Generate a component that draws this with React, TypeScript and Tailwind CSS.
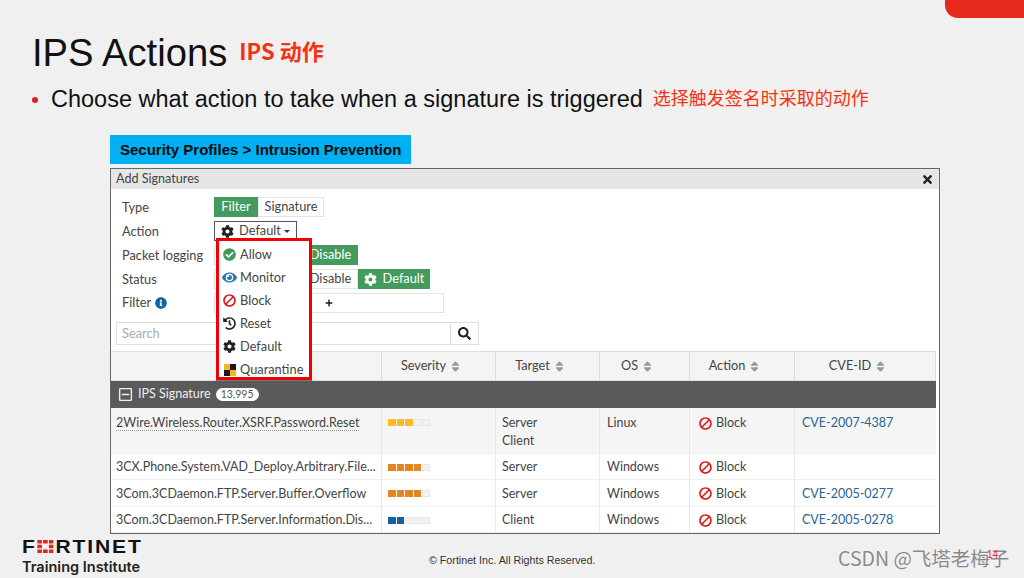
import type { ReactNode } from "react";
import {
  FaBan,
  FaCheckCircle,
  FaCog,
  FaEye,
  FaHistory,
  FaInfoCircle,
  FaPlus,
  FaRegMinusSquare,
  FaSearch,
  FaSort,
  FaTimes,
} from "react-icons/fa";

const CJK = "font-['Noto_Sans_CJK_SC',sans-serif]";
const ARIAL = "font-['Liberation_Sans',sans-serif]";

interface Signature {
  name: string;
  level: number;
  color: string;
  targets: string[];
  os: string;
  cve: string;
  height: string;
  bg: string;
}

const rows: Signature[] = [
  {
    name: "2Wire.Wireless.Router.XSRF.Password.Reset",
    level: 3,
    color: "bg-[#f8bc2a]",
    targets: ["Server", "Client"],
    os: "Linux",
    cve: "CVE-2007-4387",
    height: "h-[46px]",
    bg: "bg-[#f5f5f5]",
  },
  {
    name: "3CX.Phone.System.VAD_Deploy.Arbitrary.File...",
    level: 4,
    color: "bg-[#e58420]",
    targets: ["Server"],
    os: "Windows",
    cve: "",
    height: "h-[26px]",
    bg: "bg-white",
  },
  {
    name: "3Com.3CDaemon.FTP.Server.Buffer.Overflow",
    level: 4,
    color: "bg-[#e58420]",
    targets: ["Server"],
    os: "Windows",
    cve: "CVE-2005-0277",
    height: "h-[27px]",
    bg: "bg-white",
  },
  {
    name: "3Com.3CDaemon.FTP.Server.Information.Dis...",
    level: 2,
    color: "bg-[#14629d]",
    targets: ["Client"],
    os: "Windows",
    cve: "CVE-2005-0278",
    height: "h-[26px]",
    bg: "bg-white",
  },
];

const columns = ["Severity", "Target", "OS", "Action", "CVE-ID"];
const columnGrid = "grid grid-cols-[271px_114px_104px_90px_105px_141px]";

function QuarantineIcon() {
  return (
    <svg width="12" height="12" viewBox="0 0 12 12">
      <rect width="6" height="6" fill="#f5b81c" />
      <rect x="6" width="6" height="6" fill="#1a1a1a" />
      <rect y="6" width="6" height="6" fill="#1a1a1a" />
      <rect x="6" y="6" width="6" height="6" fill="#f5b81c" />
    </svg>
  );
}

function BlockIcon() {
  return <FaBan className="-scale-x-100 text-[13px] text-[#dd1a1a]" />;
}

function FormRow({ label, height, children }: { label: ReactNode; height: string; children: ReactNode }) {
  return (
    <div className={`flex items-center ${height}`}>
      <div className="flex w-[92px] items-center gap-1 text-[#444]">{label}</div>
      {children}
    </div>
  );
}

function MenuItem({ icon, label }: { icon: ReactNode; label: string }) {
  return (
    <div className="flex h-[23px] shrink-0 items-center">
      <div className="flex w-[21px] justify-center">{icon}</div>
      <span className="text-[#444]">{label}</span>
    </div>
  );
}

function ActionMenu() {
  return (
    <div className="absolute top-[17px] left-[2px] z-10 flex h-[142px] w-[96px] flex-col border-[3px] border-[#f00000] bg-white pt-[2px] shadow-[0_1px_0_#777]">
      <MenuItem icon={<FaCheckCircle className="text-[13px] text-[#3f9a57]" />} label="Allow" />
      <MenuItem icon={<FaEye className="text-[15px] text-[#2a77b0]" />} label="Monitor" />
      <MenuItem icon={<BlockIcon />} label="Block" />
      <MenuItem icon={<FaHistory className="text-[13px] text-[#222]" />} label="Reset" />
      <MenuItem icon={<FaCog className="text-[13px] text-[#222]" />} label="Default" />
      <MenuItem icon={<QuarantineIcon />} label="Quarantine" />
    </div>
  );
}

function SeverityBar({ level, color }: { level: number; color: string }) {
  return (
    <div className="flex gap-px">
      {[0, 1, 2, 3, 4].map((i) => (
        <span key={i} className={`h-[7px] w-[7.5px] ${i < level ? color : "border border-[#e6e6e6] bg-[#f2f2f2]"}`} />
      ))}
    </div>
  );
}

function SignatureRow({ row }: { row: Signature }) {
  const multi = row.targets.length > 1;
  const align = multi ? "pt-[6px]" : "flex items-center pt-[1px]";
  return (
    <div className={`${columnGrid} ${row.height} ${row.bg} border-b border-[#eeeeee] text-[12.5px] leading-[18px] text-[#444]`}>
      <div className={`${align} border-r border-[#e8e8e8] pl-[5px]`}>
        <span className={multi ? "border-b border-dotted border-[#999]" : ""}>{row.name}</span>
      </div>
      <div className={`${multi ? "pt-[11px]" : "flex items-center pt-[1px]"} border-r border-[#e8e8e8] pl-[6px]`}>
        <SeverityBar level={row.level} color={row.color} />
      </div>
      <div className={`${align} border-r border-[#e8e8e8] pl-[6px]`}>
        <div>
          {row.targets.map((t) => (
            <div key={t}>{t}</div>
          ))}
        </div>
      </div>
      <div className={`${align} border-r border-[#e8e8e8] pl-[7px]`}>{row.os}</div>
      <div className={`${align} border-r border-[#e8e8e8] pl-[9px]`}>
        <div className="flex items-center gap-[4px]">
          <BlockIcon />
          Block
        </div>
      </div>
      <div className={`${align} pl-[7px] text-[#2a6496]`}>{row.cve}</div>
    </div>
  );
}

function Dialog() {
  return (
    <div className="mt-1 flex h-[366px] w-[830px] flex-col border border-[#666] bg-white font-['Lato',sans-serif]">
      <div className="flex h-[20px] items-center justify-between bg-[#e6e6e6] px-[5px] text-[12.6px] text-[#444]">
        <span>Add Signatures</span>
        <FaTimes className="text-[13px] text-[#222]" />
      </div>

      <div className="mt-[7px] pl-[11px] text-[12.8px]">
        <FormRow label="Type" height="h-6">
          <div className="mb-[2px] flex h-[20px]">
            <div className="flex w-[44px] items-center justify-center bg-[#459b5e] text-white">Filter</div>
            <div className="flex w-[66px] items-center justify-center border border-[#e4e4e4] text-[#444]">Signature</div>
          </div>
        </FormRow>
        <FormRow label="Action" height="h-6">
          <div className="relative mb-[2px]">
            <div className="flex h-[20px] w-[83px] items-center justify-center gap-[5px] border border-[#555] text-[#444]">
              <FaCog className="text-[13px] text-[#222]" />
              <span>Default</span>
              <span className="-ml-[2px] border-x-[3px] border-t-[3px] border-x-transparent border-t-[#333]" />
            </div>
            <ActionMenu />
          </div>
        </FormRow>
        <FormRow label="Packet logging" height="h-6">
          <div className="mb-[2px] flex h-[20px]">
            <div className="w-[89px] border border-[#e4e4e4]" />
            <div className="flex w-[55px] items-center justify-center bg-[#459b5e] text-white">Disable</div>
          </div>
        </FormRow>
        <FormRow label="Status" height="h-6">
          <div className="mb-[2px] flex h-[20px]">
            <div className="w-[89px] border border-[#e4e4e4]" />
            <div className="flex w-[55px] items-center justify-center border border-[#e4e4e4] text-[#444]">Disable</div>
            <div className="flex w-[72px] items-center justify-center gap-[6px] bg-[#459b5e] text-white">
              <FaCog className="text-[13px]" />
              Default
            </div>
          </div>
        </FormRow>
        <div className="-mt-px">
          <FormRow
            height="h-[23px]"
            label={
              <>
                Filter <FaInfoCircle className="text-[12px] text-[#14629d]" />
              </>
            }
          >
            <div className="flex h-[20px] w-[230px] items-center justify-center border border-[#e4e4e4]">
              <FaPlus className="text-[8px] text-[#222]" />
            </div>
          </FormRow>
        </div>
      </div>

      <div className="mt-[8px] ml-[5px] flex h-[23px] w-[363px] text-[12.8px]">
        <div className="flex flex-1 items-center border border-[#dddddd] pl-[5px] text-[#aaaaaa]">Search</div>
        <div className="flex w-[28px] items-center justify-center border border-l-0 border-[#dddddd]">
          <FaSearch className="text-[13px] text-[#222]" />
        </div>
      </div>

      <div className="mt-[6px] w-[825px] text-[12.7px] text-[#444]">
        <div className={`${columnGrid} h-[30px] border-t border-b border-[#dddddd] bg-[#f4f4f4]`}>
          <div className="border-r border-[#dddddd]" />
          {columns.map((c) => (
            <div key={c} className="flex items-center justify-center gap-[3px] border-r border-[#dddddd] pr-[14px]">
              {c}
              <FaSort className="text-[13px] text-[#999]" />
            </div>
          ))}
        </div>
        <div className="flex h-[27px] items-center gap-[5px] bg-[#5a5a5a] pl-[7px] text-[12.5px] text-[#eeeeee]">
          <FaRegMinusSquare className="text-[15px]" />
          <span>IPS Signature</span>
          <span className="flex h-[13px] items-center rounded-full bg-white px-[5px] text-[10.5px] text-[#555]">13,995</span>
        </div>
        {rows.map((row) => (
          <SignatureRow key={row.name} row={row} />
        ))}
      </div>
    </div>
  );
}

function Footer() {
  return (
    <div className="flex flex-1 items-start pl-[22px]">
      <div className="w-[118px] pt-[5px]">
        <div className={`${ARIAL} flex h-[15px] origin-left scale-x-[1.17] items-center text-[18px] leading-none font-bold tracking-[1.6px] text-[#111]`}>
          <span>F</span>
          <svg width="14" height="13" viewBox="0 0 14 13" className="mr-[2px]">
            <rect width="4" height="3.5" fill="#da291c" />
            <rect x="5" width="4" height="3.5" fill="#da291c" />
            <rect x="10" width="4" height="3.5" fill="#da291c" />
            <rect y="4.7" width="4" height="3.5" fill="#da291c" />
            <rect x="10" y="4.7" width="4" height="3.5" fill="#da291c" />
            <rect y="9.5" width="4" height="3.5" fill="#da291c" />
            <rect x="5" y="9.5" width="4" height="3.5" fill="#da291c" />
            <rect x="10" y="9.5" width="4" height="3.5" fill="#da291c" />
          </svg>
          <span>RTINET</span>
        </div>
        <div className="mt-[4px] font-['Inter',sans-serif] text-[14.5px] leading-[18px] font-semibold whitespace-nowrap text-[#222]">
          Training Institute
        </div>
      </div>
      <div className={`${ARIAL} mt-[19px] ml-[289px] text-[10.7px] leading-[14px] text-[#333]`}>
        © Fortinet Inc. All Rights Reserved.
      </div>
    </div>
  );
}

export default function App() {
  return (
    <div className={`${ARIAL} relative flex h-[578px] w-[1024px] flex-col overflow-hidden bg-[#f0f0f0]`}>
      <div className="absolute top-0 right-0 h-[18px] w-[79px] rounded-bl-[13px] bg-[#e52a1c]" />

      <div className="mt-[33px] flex h-[40px] items-center pl-[32px]">
        <span className="text-[38.2px] leading-none text-[#111]">IPS Actions</span>
        <span className={`${CJK} mb-[5px] ml-[12px] text-[22px] font-bold text-[#f5320f]`}>IPS 动作</span>
      </div>

      <div className="mt-[12px] flex h-[30px] items-center pl-[32px]">
        <span className="h-[6px] w-[6px] rounded-full bg-[#d8201a]" />
        <span className="ml-[13px] text-[23.5px] leading-none text-[#111]">Choose what action to take when a signature is triggered</span>
        <span className={`${CJK} mb-[5px] ml-[10px] text-[18px] text-[#f5320f]`}>选择触发签名时采取的动作</span>
      </div>

      <div className="mt-[20px] ml-[110px] flex flex-col">
        <div className="flex h-[29px] w-[301px] items-center bg-[#00b0f0] pt-[1px] pl-[10px] text-[15px] font-bold text-[#0a0a0a]">
          Security Profiles &gt; Intrusion Prevention
        </div>
        <Dialog />
      </div>

      <Footer />

      <div className={`${CJK} absolute top-[546px] left-[838px] text-[19.5px] leading-[24px] text-[#8a8a8a] [text-shadow:0_0_1px_#fff]`}>
        CSDN @飞塔老梅子
      </div>
      <div className="absolute top-[550px] left-[987px] text-[10px] leading-none text-[#f02020]">14</div>
    </div>
  );
}
